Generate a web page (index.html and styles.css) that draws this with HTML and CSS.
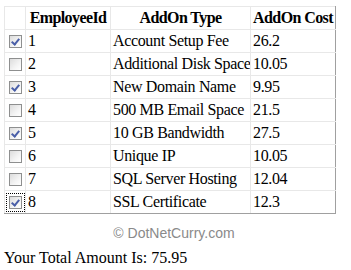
FILE: index.html
```html
<!DOCTYPE html>
<html>
<head>
<meta charset="utf-8">
<link rel="stylesheet" href="styles.css">
</head>
<body>
<div class="page">
  <table class="grid">
    <colgroup>
      <col class="c-chk"><col class="c-id"><col class="c-type"><col class="c-cost">
    </colgroup>
    <thead>
      <tr><th></th><th>EmployeeId</th><th>AddOn Type</th><th>AddOn Cost</th></tr>
    </thead>
    <tbody>
      <tr><td class="chk"><span class="cb on"></span></td><td>1</td><td>Account Setup Fee</td><td>26.2</td></tr>
      <tr><td class="chk"><span class="cb"></span></td><td>2</td><td>Additional Disk Space</td><td>10.05</td></tr>
      <tr><td class="chk"><span class="cb on"></span></td><td>3</td><td>New Domain Name</td><td>9.95</td></tr>
      <tr><td class="chk"><span class="cb"></span></td><td>4</td><td>500 MB Email Space</td><td>21.5</td></tr>
      <tr><td class="chk"><span class="cb on"></span></td><td>5</td><td>10 GB Bandwidth</td><td>27.5</td></tr>
      <tr><td class="chk"><span class="cb"></span></td><td>6</td><td>Unique IP</td><td>10.05</td></tr>
      <tr><td class="chk"><span class="cb"></span></td><td>7</td><td>SQL Server Hosting</td><td>12.04</td></tr>
      <tr><td class="chk"><span class="cb on focus"></span></td><td>8</td><td>SSL Certificate</td><td>12.3</td></tr>
    </tbody>
  </table>
  <div class="copy">© DotNetCurry.com</div>
  <div class="total">Your Total Amount Is: 75.95</div>
</div>
</body>
</html>
```
FILE: styles.css
```css
html, body { margin: 0; padding: 0; background: #fff; }
body { font-family: "Liberation Serif", "Times New Roman", serif; font-size: 16px; color: #000; }
.page { padding: 6px 0 0 4px; }
.grid {
  border-collapse: collapse;
  table-layout: fixed;
  width: 331px;
  border-top: 1px solid #e8e8e8;
  border-left: 1px solid #e8e8e8;
  border-right: 1px solid #a0a0a0;
  border-bottom: 1px solid #a0a0a0;
}
.c-chk { width: 21px; }
.c-id { width: 85px; }
.c-type { width: 140px; }
.c-cost { width: 85px; }
.grid th, .grid td {
  border: 1px solid #e8e8e8;
  height: 22px;
  padding: 0 0 0 2px;
  line-height: 18px;
  white-space: nowrap;
  overflow: hidden;
  vertical-align: middle;
  letter-spacing: -0.35px;
}
.grid th { font-weight: bold; text-align: center; padding: 0; letter-spacing: -0.6px; }
.grid tr > :last-child { border-right-color: #a0a0a0; }
.grid tbody tr:last-child td { border-bottom-color: #a0a0a0; }
.grid td.chk { padding: 0; text-align: center; }
.cb {
  display: inline-block;
  position: relative;
  width: 11px; height: 11px;
  border: 1px solid #8e8f8f;
  background: linear-gradient(135deg, #dcdcdc 0%, #f4f4f4 60%, #fff 100%);
  vertical-align: middle;
  margin-top: -2px;
}
.cb.on::after {
  content: "";
  position: absolute;
  left: 3px; top: 1px;
  width: 3px; height: 6px;
  border: solid #4a5fa8;
  border-width: 0 2px 2px 0;
  transform: rotate(40deg);
}
.cb.focus { outline: 1px dotted #000; outline-offset: 2px; }
.copy {
  font-family: "Liberation Sans", Arial, sans-serif;
  font-size: 14px;
  color: #8a8a8a;
  text-align: center;
  width: 340px;
  margin-top: 11px;
}
.total { margin-top: 8px; }
```
